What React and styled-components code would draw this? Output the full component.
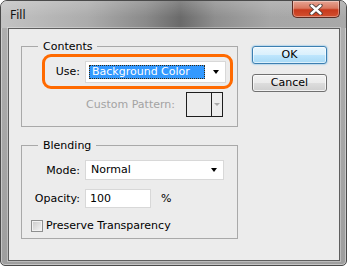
import React from "react";
import styled, { createGlobalStyle } from "styled-components";

const Global = createGlobalStyle`
  body {
    margin: 0;
    background: #ffffff;
    font-family: "DejaVu Sans", "Liberation Sans", sans-serif;
    font-size: 11px;
    color: #000;
  }
`;

const Window = styled.div`
  box-sizing: border-box;
  width: 347px;
  height: 266px;
  display: flex;
  flex-direction: column;
  padding: 0 6px 4px 7px;
  border: 1px solid #4a4a4a;
  border-radius: 7px 7px 5px 5px;
  background: linear-gradient(#b0b0b0, #9e9e9e);
  box-shadow: inset 0 0 0 1px rgba(255, 255, 255, 0.4);
  overflow: hidden;
`;

const TitleBar = styled.div`
  height: 27px;
  margin: 0 -6px 0 -7px;
  padding: 0 6px 0 7px;
  display: flex;
  justify-content: space-between;
  align-items: flex-start;
  background:
    linear-gradient(rgba(255, 255, 255, 0.18), rgba(255, 255, 255, 0) 60%),
    linear-gradient(
      90deg,
      #c3c3c3 0%,
      #acacac 25%,
      #8a8a8a 42%,
      #6a6a6a 52%,
      #8e8e8e 62%,
      #a6a6a6 78%,
      #a9a9a9 100%
    );
`;

const Title = styled.span`
  margin: 6px 0 0 2px;
  font-family: "Noto Sans", "Open Sans", sans-serif;
  font-size: 12px;
  line-height: 15px;
  color: #111;
`;

const CloseButton = styled.div`
  width: 48px;
  height: 17px;
  box-sizing: border-box;
  display: flex;
  align-items: center;
  justify-content: center;
  border: 1px solid #5a2b22;
  border-top: none;
  border-radius: 0 0 5px 5px;
  background: linear-gradient(#e6a493 0%, #d9785f 45%, #c8391c 55%, #d2502f 100%);
  box-shadow: inset 0 0 0 1px rgba(255, 255, 255, 0.35);
`;

const Client = styled.div`
  flex: 1;
  display: flex;
  align-items: flex-start;
  padding: 11px 0 0 12px;
  background: #ececec;
  border: 1px solid #5e5e5e;
  box-shadow: 0 0 0 1px rgba(255, 255, 255, 0.3);
`;

const LeftColumn = styled.div`
  width: 217px;
  display: flex;
  flex-direction: column;
  gap: 12px;
`;

const ButtonColumn = styled.div`
  display: flex;
  flex-direction: column;
  gap: 10px;
  margin: 6px 0 0 14px;
`;

const Group = styled.fieldset`
  margin: 0;
  min-width: 0;
  padding: 0 0 ${(p) => p.$pb}px 0;
  border: 1px solid #a9a9a9;
`;

const Legend = styled.legend`
  margin-left: 16px;
  padding: 0 5px;
  line-height: 13px;
  font-size: 11px;
`;

const Highlight = styled.div`
  box-sizing: border-box;
  width: 191px;
  height: 35px;
  margin: 1px 0 0 20px;
  display: flex;
  align-items: center;
  border: 3px solid #ff6a00;
  border-radius: 9px;
`;

const Row = styled.div`
  display: flex;
  align-items: center;
  margin: ${(p) => p.$mt || 0}px 0 0 ${(p) => p.$ml || 0}px;
`;

const Label = styled.span`
  width: ${(p) => p.$w}px;
  margin-right: ${(p) => p.$gap ?? 5}px;
  text-align: right;
  line-height: 13px;
  color: ${(p) => (p.$disabled ? "#a3a3a3" : "#000")};
  white-space: nowrap;
`;

const Select = styled.div`
  box-sizing: border-box;
  width: ${(p) => p.$w}px;
  height: ${(p) => p.$h}px;
  display: flex;
  align-items: center;
  padding: 0 6px 0 3px;
  background: #ffffff;
  border: 1px solid #d8d8d8;
`;

const SelectValue = styled.span`
  box-sizing: border-box;
  height: 14px;
  line-height: 14px;
  padding-left: ${(p) => (p.$selected ? 3 : 2)}px;
  width: ${(p) => (p.$selected ? "116px" : "auto")};
  background: ${(p) => (p.$selected ? "#3399ff" : "transparent")};
  color: ${(p) => (p.$selected ? "#fff" : "#000")};
  outline: ${(p) => (p.$selected ? "1px dotted #3a2a10" : "none")};
  outline-offset: -1px;
`;

const Arrow = styled.span`
  margin-left: auto;
  width: 0;
  height: 0;
  border-left: 3.5px solid transparent;
  border-right: 3.5px solid transparent;
  border-top: 4px solid ${(p) => p.$color || "#000"};
`;

const PatternSwatch = styled.div`
  box-sizing: border-box;
  width: 37px;
  height: 25px;
  display: flex;
  border: 1px solid #1e1e1e;
`;

const SwatchFill = styled.div`
  flex: 1;
  background: #ececec;
`;

const SwatchDrop = styled.div`
  width: 10px;
  display: flex;
  align-items: center;
  justify-content: center;
  border-left: 1px solid #1e1e1e;

  & > span {
    margin: 0;
    border-left-width: 3px;
    border-right-width: 3px;
    border-top-width: 3px;
  }
`;

const NumberInput = styled.input`
  box-sizing: border-box;
  width: 66px;
  height: 19px;
  padding: 0 4px;
  border: 1px solid #d8d8d8;
  background: #fff;
  font: inherit;
  color: #000;
  outline: none;
`;

const Unit = styled.span`
  margin-left: 10px;
`;

const Checkbox = styled.span`
  box-sizing: border-box;
  width: 12px;
  height: 12px;
  margin-right: 3px;
  border: 1px solid #8e8f8f;
  background: linear-gradient(135deg, #c9c9c9, #f6f6f6);
  box-shadow: inset 0 0 0 1px #f2f2f2;
`;

const Button = styled.button`
  box-sizing: border-box;
  width: 75px;
  height: 18px;
  padding: 0;
  font-family: inherit;
  font-size: 11px;
  line-height: 16px;
  color: #000;
  border-radius: 3px;
  border: 1px solid ${(p) => (p.$primary ? "#3c7fb1" : "#707070")};
  background: ${(p) =>
    p.$primary
      ? "linear-gradient(#eaf6fd 0%, #d9f0fc 50%, #bee6fd 51%, #a7d9f5 100%)"
      : "linear-gradient(#f2f2f2 0%, #ebebeb 50%, #dddddd 51%, #cfcfcf 100%)"};
  box-shadow: ${(p) =>
    p.$primary
      ? "inset 0 0 0 1px rgba(255,255,255,0.6), 0 0 2px #4aa8e6"
      : "inset 0 0 0 1px rgba(255,255,255,0.7)"};
`;

function CloseGlyph() {
  return (
    <svg width="14" height="11" viewBox="0 0 14 11">
      <path d="M2.5 1.5 L11.5 9.5 M11.5 1.5 L2.5 9.5" stroke="#4a3a36" strokeWidth="4.2" strokeLinecap="round" />
      <path d="M2.5 1.5 L11.5 9.5 M11.5 1.5 L2.5 9.5" stroke="#ffffff" strokeWidth="2.4" strokeLinecap="round" />
    </svg>
  );
}

export default function App() {
  return (
    <>
      <Global />
      <Window>
        <TitleBar>
          <Title>Fill</Title>
          <CloseButton>
            <CloseGlyph />
          </CloseButton>
        </TitleBar>
        <Client>
          <LeftColumn>
            <Group $pb={9}>
              <Legend>Contents</Legend>
              <Highlight>
                <Label $w={35}>Use:</Label>
                <Select $w={141} $h={22}>
                  <SelectValue $selected>Background Color</SelectValue>
                  <Arrow />
                </Select>
              </Highlight>
              <Row $mt={3}>
                <Label $w={153} $gap={11} $disabled>
                  Custom Pattern:
                </Label>
                <PatternSwatch>
                  <SwatchFill />
                  <SwatchDrop>
                    <Arrow $color="#a8a8a8" />
                  </SwatchDrop>
                </PatternSwatch>
              </Row>
            </Group>
            <Group $pb={6}>
              <Legend>Blending</Legend>
              <Row $mt={8}>
                <Label $w={58}>Mode:</Label>
                <Select $w={139} $h={20}>
                  <SelectValue>Normal</SelectValue>
                  <Arrow />
                </Select>
              </Row>
              <Row $mt={9}>
                <Label $w={58}>Opacity:</Label>
                <NumberInput value="100" readOnly />
                <Unit>%</Unit>
              </Row>
              <Row $mt={11} $ml={9}>
                <Checkbox />
                <span>Preserve Transparency</span>
              </Row>
            </Group>
          </LeftColumn>
          <ButtonColumn>
            <Button $primary>OK</Button>
            <Button>Cancel</Button>
          </ButtonColumn>
        </Client>
      </Window>
    </>
  );
}
